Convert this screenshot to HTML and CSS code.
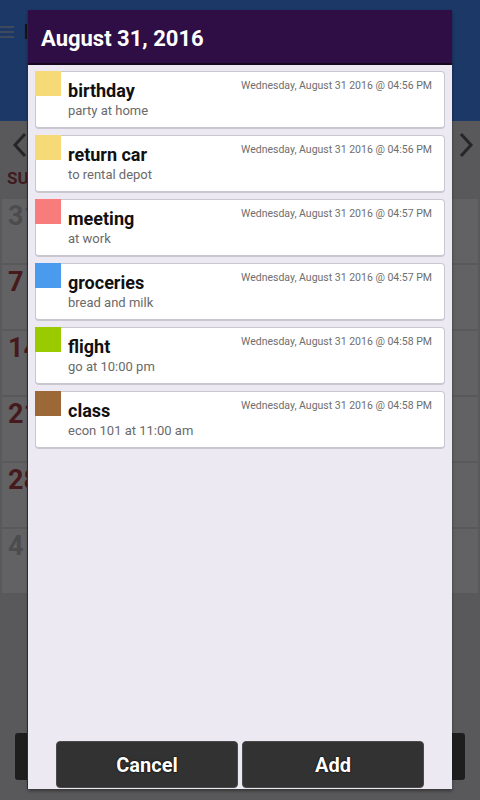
FILE: index.html
```html
<!DOCTYPE html>
<html>
<head>
<meta charset="utf-8">
<link rel="stylesheet" href="styles.css">
</head>
<body>
<div class="app">
  <header class="topbar">
    <svg class="menu" width="16" height="16" viewBox="0 0 16 16"><path d="M0 3h14M0 8h14M0 13h14" stroke="#3e4a5c" stroke-width="2"/></svg>
    <span class="apptitle">M</span>
  </header>
  <div class="nav">
    <svg width="16" height="26" viewBox="0 0 16 26"><path d="M13 2L3 13l10 11" fill="none" stroke="#262626" stroke-width="3"/></svg>
    <svg width="16" height="26" viewBox="0 0 16 26"><path d="M3 2l10 11L3 24" fill="none" stroke="#262626" stroke-width="3"/></svg>
  </div>
  <div class="days"><span>SU</span></div>
  <div class="grid">
    <div class="cell muted">31</div><div class="cell"></div><div class="cell"></div><div class="cell"></div><div class="cell"></div><div class="cell"></div><div class="cell"></div>
    <div class="cell">7</div><div class="cell"></div><div class="cell"></div><div class="cell"></div><div class="cell"></div><div class="cell"></div><div class="cell"></div>
    <div class="cell">14</div><div class="cell"></div><div class="cell"></div><div class="cell"></div><div class="cell"></div><div class="cell"></div><div class="cell"></div>
    <div class="cell">21</div><div class="cell"></div><div class="cell"></div><div class="cell"></div><div class="cell"></div><div class="cell"></div><div class="cell"></div>
    <div class="cell">28</div><div class="cell"></div><div class="cell"></div><div class="cell"></div><div class="cell"></div><div class="cell"></div><div class="cell"></div>
    <div class="cell muted">4</div><div class="cell"></div><div class="cell"></div><div class="cell"></div><div class="cell"></div><div class="cell"></div><div class="cell"></div>
  </div>
  <div class="bottombar">
    <div class="bgbtn"></div>
    <div class="bgbtn"></div>
  </div>
</div>

<div class="dialog">
  <div class="dlg-head">August 31, 2016</div>
  <div class="dlg-body">
    <div class="card">
      <div class="swatch yellow"></div>
      <div class="card-text"><div class="title">birthday</div><div class="sub">party at home</div></div>
      <div class="stamp">Wednesday, August 31 2016 @ 04:56 PM</div>
    </div>
    <div class="card">
      <div class="swatch yellow"></div>
      <div class="card-text"><div class="title">return car</div><div class="sub">to rental depot</div></div>
      <div class="stamp">Wednesday, August 31 2016 @ 04:56 PM</div>
    </div>
    <div class="card">
      <div class="swatch red"></div>
      <div class="card-text"><div class="title">meeting</div><div class="sub">at work</div></div>
      <div class="stamp">Wednesday, August 31 2016 @ 04:57 PM</div>
    </div>
    <div class="card">
      <div class="swatch blue"></div>
      <div class="card-text"><div class="title">groceries</div><div class="sub">bread and milk</div></div>
      <div class="stamp">Wednesday, August 31 2016 @ 04:57 PM</div>
    </div>
    <div class="card">
      <div class="swatch green"></div>
      <div class="card-text"><div class="title">flight</div><div class="sub">go at 10:00 pm</div></div>
      <div class="stamp">Wednesday, August 31 2016 @ 04:58 PM</div>
    </div>
    <div class="card">
      <div class="swatch brown"></div>
      <div class="card-text"><div class="title">class</div><div class="sub">econ 101 at 11:00 am</div></div>
      <div class="stamp">Wednesday, August 31 2016 @ 04:58 PM</div>
    </div>
  </div>
  <div class="dlg-actions">
    <button class="btn">Cancel</button>
    <button class="btn">Add</button>
  </div>
</div>
</body>
</html>
```
FILE: styles.css
```css
html, body {
  margin: 0;
  padding: 0;
}
body {
  width: 480px;
  height: 800px;
  overflow: hidden;
  position: relative;
  font-family: Roboto, "Liberation Sans", sans-serif;
  background: #5a5a5c;
}
.app {
  width: 480px;
  height: 800px;
  display: flex;
  flex-direction: column;
  background: #59595b;
}
.topbar {
  height: 121px;
  background: #1c3866;
  display: flex;
  align-items: flex-start;
  padding: 22px 0 0 0;
  box-sizing: border-box;
  gap: 8px;
}
.menu {
  margin-top: 2px;
}
.apptitle {
  color: #111;
  font-weight: bold;
  font-size: 20px;
  line-height: 20px;
}
.nav {
  height: 48px;
  display: flex;
  justify-content: space-between;
  align-items: center;
  padding: 0 6px 0 12px;
}
.days {
  display: grid;
  grid-template-columns: repeat(7, 1fr);
  height: 30px;
  padding: 0 7px;
  color: #3f1a1e;
  font-weight: bold;
  font-size: 17px;
  line-height: 18px;
  align-items: start;
}
.grid {
  display: grid;
  grid-template-columns: repeat(7, 1fr);
  grid-auto-rows: 64px;
  gap: 2px;
  padding: 0 2px;
}
.cell {
  background: #626264;
  color: #461a1c;
  font-weight: bold;
  font-size: 27px;
  line-height: 30px;
  padding: 2px 6px;
}
.cell.muted {
  color: #4c4c4e;
}
.bottombar {
  margin-top: auto;
  margin-bottom: 20px;
  display: flex;
  gap: 6px;
  padding: 0 15px;
}
.bgbtn {
  flex: 1;
  height: 47px;
  background: #1e1e1e;
  border-radius: 3px;
}
.dialog {
  position: absolute;
  left: 28px;
  top: 10px;
  width: 424px;
  height: 779px;
  background: #ede9f3;
  display: flex;
  flex-direction: column;
  box-shadow: -1px 0 0 #2d2d30, 0 2px 3px rgba(0,0,0,0.4);
}
.dlg-head {
  height: 53px;
  background: #2e0e45;
  border-bottom: 2px solid #150820;
  color: #fff;
  font-weight: bold;
  font-size: 22px;
  line-height: 57px;
  padding-left: 13px;
  box-sizing: content-box;
}
.dlg-body {
  flex: 1;
  display: flex;
  flex-direction: column;
  gap: 6px;
  padding: 6px 7px;
}
.card {
  height: 58px;
  box-sizing: border-box;
  background: #fff;
  border: 1px solid #c9c7d0;
  border-bottom-width: 2px;
  border-radius: 4px;
  display: flex;
  position: relative;
}
.swatch {
  width: 26px;
  height: 25px;
  margin: -1px 0 0 -1px;
  flex: none;
}
.yellow { background: #f6da78; }
.red { background: #f87c7c; }
.blue { background: #4a9bee; }
.green { background: #99cb00; }
.brown { background: #9c6838; }
.card-text {
  padding: 9px 0 0 7px;
  flex: 1;
}
.title {
  font-weight: bold;
  font-size: 18px;
  line-height: 20px;
  color: #111;
}
.sub {
  font-size: 13px;
  line-height: 20px;
  color: #6a6a6a;
}
.stamp {
  position: absolute;
  right: 12px;
  top: 7px;
  font-size: 10.5px;
  line-height: 13px;
  color: #6e6e6e;
}
.dlg-actions {
  display: flex;
  gap: 4px;
  padding: 0 28px 1px;
}
.btn {
  flex: 1;
  height: 47px;
  background: #323232;
  border: 1px solid #4a4a4a;
  border-radius: 4px;
  color: #fff;
  font-family: Roboto, "Liberation Sans", sans-serif;
  font-weight: bold;
  font-size: 20px;
  text-shadow: 0 0 2px #000, 0 0 1px #000;
  padding: 0;
}
```
